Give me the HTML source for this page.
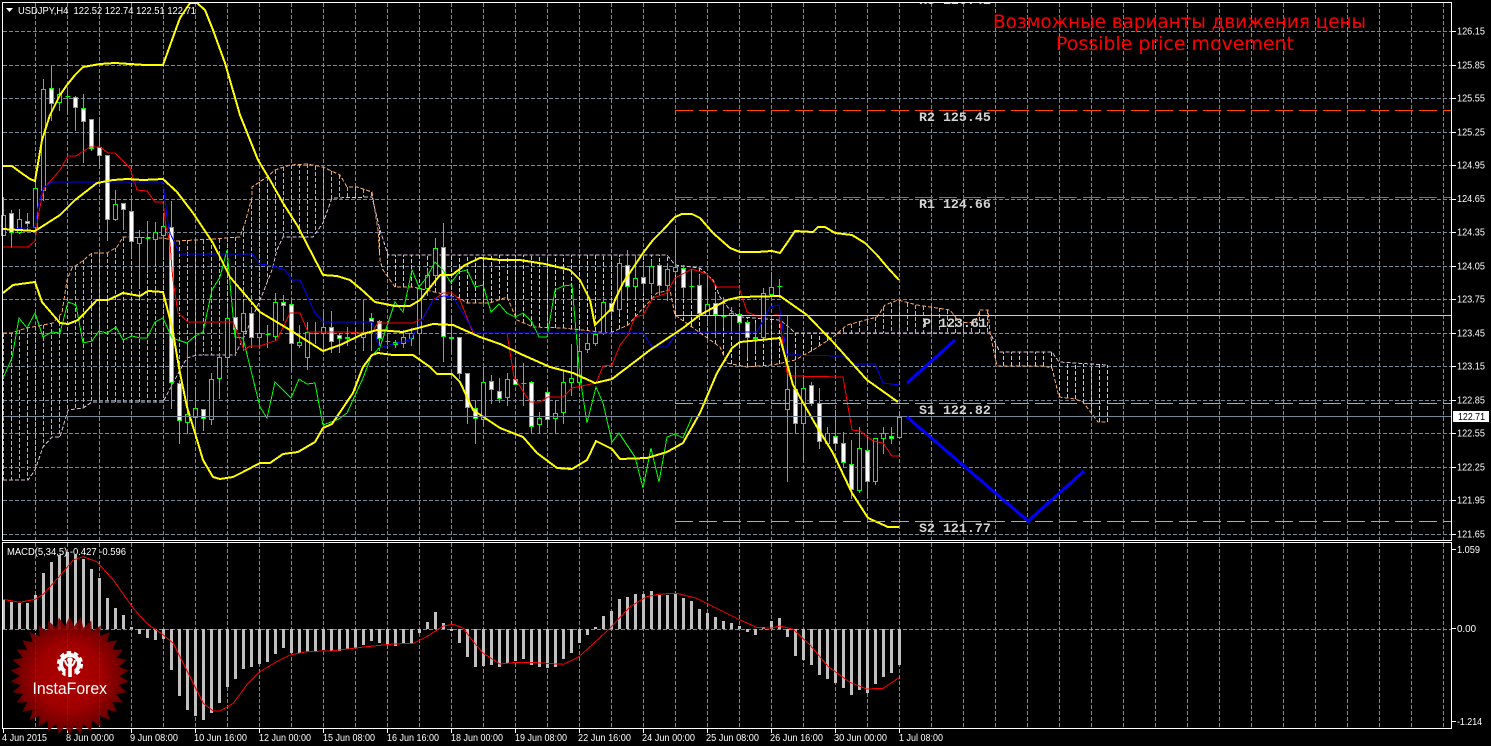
<!DOCTYPE html>
<html lang="ru">
<head>
<meta charset="utf-8">
<title>USDJPY,H4</title>
<style>
html,body{margin:0;padding:0;background:#000;width:1491px;height:746px;overflow:hidden}
svg{display:block}
.ax{font-family:"Liberation Sans",sans-serif;font-size:10.5px;fill:#fff}
.lv{font-family:"Liberation Mono",monospace;font-size:13.3px;font-weight:bold;fill:#d4d4d4}
.rd{font-family:"DejaVu Sans","Liberation Sans",sans-serif;font-size:19px;fill:#f00}
</style>
</head>
<body>
<svg id="s" xmlns="http://www.w3.org/2000/svg" width="1491" height="746" viewBox="0 0 1491 746">
<defs>
<radialGradient id="lg" cx="50%" cy="50%" r="50%">
<stop offset="0" stop-color="#c40000"/>
<stop offset=".55" stop-color="#b00000"/>
<stop offset="1" stop-color="#6c0000"/>
</radialGradient>
</defs>
<rect width="1491" height="746" fill="#000"/>
<g id="grid" shape-rendering="crispEdges"></g>
<g id="cloud" shape-rendering="crispEdges"></g>
<g id="macd" shape-rendering="crispEdges"></g>
<g id="cand" shape-rendering="crispEdges"></g>
<g shape-rendering="crispEdges" fill="none">
<polyline id="green" stroke="#00ff00" stroke-width="1"/>
<polyline id="red" stroke="#ff0000" stroke-width="1"/>
<polyline id="blue" stroke="#0000ff" stroke-width="1"/>
<polyline id="up" stroke="#ffff00" stroke-width="2"/>
<polyline id="mid" stroke="#ffff00" stroke-width="2"/>
<polyline id="low" stroke="#ffff00" stroke-width="2"/>
<line x1="675" y1="110.5" x2="1451" y2="110.5" stroke="#ff4500" stroke-dasharray="18 6"/>
<line x1="675" y1="197.5" x2="1451" y2="197.5" stroke="#ff4500" stroke-dasharray="18 6"/>
<line x1="675" y1="315.5" x2="1451" y2="315.5" stroke="#ffd700"/>
<line x1="675" y1="403.5" x2="1451" y2="403.5" stroke="#c8a08c" stroke-dasharray="18 6"/>
<line x1="675" y1="521.5" x2="1451" y2="521.5" stroke="#c8a08c" stroke-dasharray="18 6"/>
<line x1="2" y1="416.5" x2="1451" y2="416.5" stroke="#778899"/>
<polyline id="sig" stroke="#ff0000" stroke-width="1"/>
<polyline points="907,383 955,340" stroke="#0000ff" stroke-width="3"/>
<polyline points="907,417 1028,521 1084,471" stroke="#0000ff" stroke-width="3"/>
</g>

<text class="lv" x="919" y="4">R3 126.41</text>
<rect x="0" y="0" width="1491" height="2" fill="#000"/>
<text class="lv" x="919" y="121">R2 125.45</text>
<text class="lv" x="919" y="208">R1 124.66</text>
<text class="lv" x="923" y="327">P 123.61</text>
<text class="lv" x="919" y="414">S1 122.82</text>
<text class="lv" x="919" y="532">S2 121.77</text>

<text class="rd" x="993" y="28" textLength="373" lengthAdjust="spacingAndGlyphs">Возможные варианты движения цены</text>
<text class="rd" x="1056" y="50" textLength="238" lengthAdjust="spacingAndGlyphs">Possible price movement</text>

<polygon points="6,8 13,8 9.5,12" fill="#fff"/>
<text class="ax" x="18" y="14" textLength="178" lengthAdjust="spacingAndGlyphs" xml:space="preserve">USDJPY,H4  122.52 122.74 122.51 122.71</text>
<text class="ax" x="7" y="555" textLength="119" lengthAdjust="spacingAndGlyphs">MACD(5,34,5) -0.427 -0.596</text>

<g shape-rendering="crispEdges" stroke="#fff" fill="none">
<path d="M2.5 2.5H1451.5V540.5H2.5Z"/>
<path d="M2.5 542.5H1451.5V728.5H2.5Z"/>
</g>
<rect x="1453" y="411" width="36" height="11" fill="#fff"/>

<g class="ax">
<text x="1457" y="34.5" textLength="28" lengthAdjust="spacingAndGlyphs">126.15</text>
<text x="1457" y="68.5" textLength="28" lengthAdjust="spacingAndGlyphs">125.85</text>
<text x="1457" y="101.5" textLength="28" lengthAdjust="spacingAndGlyphs">125.55</text>
<text x="1457" y="135.5" textLength="28" lengthAdjust="spacingAndGlyphs">125.25</text>
<text x="1457" y="168.5" textLength="28" lengthAdjust="spacingAndGlyphs">124.95</text>
<text x="1457" y="202" textLength="28" lengthAdjust="spacingAndGlyphs">124.65</text>
<text x="1457" y="235.5" textLength="28" lengthAdjust="spacingAndGlyphs">124.35</text>
<text x="1457" y="269.5" textLength="28" lengthAdjust="spacingAndGlyphs">124.05</text>
<text x="1457" y="302.5" textLength="28" lengthAdjust="spacingAndGlyphs">123.75</text>
<text x="1457" y="336.5" textLength="28" lengthAdjust="spacingAndGlyphs">123.45</text>
<text x="1457" y="369.5" textLength="28" lengthAdjust="spacingAndGlyphs">123.15</text>
<text x="1457" y="403.5" textLength="28" lengthAdjust="spacingAndGlyphs">122.85</text>
<text x="1457" y="436.5" textLength="28" lengthAdjust="spacingAndGlyphs">122.55</text>
<text x="1457" y="470.5" textLength="28" lengthAdjust="spacingAndGlyphs">122.25</text>
<text x="1457" y="503.5" textLength="28" lengthAdjust="spacingAndGlyphs">121.95</text>
<text x="1457" y="537.5" textLength="28" lengthAdjust="spacingAndGlyphs">121.65</text>
<text x="1458" y="420" textLength="27" lengthAdjust="spacingAndGlyphs" style="fill:#000">122.71</text>
<text x="1457" y="553" textLength="23" lengthAdjust="spacingAndGlyphs">1.059</text>
<text x="1457" y="632" textLength="19" lengthAdjust="spacingAndGlyphs">0.00</text>
<text x="1457" y="725" textLength="25" lengthAdjust="spacingAndGlyphs">-1.214</text>
<text x="2" y="741" textLength="45" lengthAdjust="spacingAndGlyphs">4 Jun 2015</text>
<text x="66" y="741" textLength="48" lengthAdjust="spacingAndGlyphs">8 Jun 00:00</text>
<text x="130" y="741" textLength="48" lengthAdjust="spacingAndGlyphs">9 Jun 08:00</text>
<text x="194" y="741" textLength="53" lengthAdjust="spacingAndGlyphs">10 Jun 16:00</text>
<text x="259" y="741" textLength="52" lengthAdjust="spacingAndGlyphs">12 Jun 00:00</text>
<text x="323" y="741" textLength="52" lengthAdjust="spacingAndGlyphs">15 Jun 08:00</text>
<text x="387" y="741" textLength="52" lengthAdjust="spacingAndGlyphs">16 Jun 16:00</text>
<text x="451" y="741" textLength="52" lengthAdjust="spacingAndGlyphs">18 Jun 00:00</text>
<text x="515" y="741" textLength="52" lengthAdjust="spacingAndGlyphs">19 Jun 08:00</text>
<text x="578" y="741" textLength="53" lengthAdjust="spacingAndGlyphs">22 Jun 16:00</text>
<text x="642" y="741" textLength="53" lengthAdjust="spacingAndGlyphs">24 Jun 00:00</text>
<text x="706" y="741" textLength="53" lengthAdjust="spacingAndGlyphs">25 Jun 08:00</text>
<text x="770" y="741" textLength="53" lengthAdjust="spacingAndGlyphs">26 Jun 16:00</text>
<text x="834" y="741" textLength="53" lengthAdjust="spacingAndGlyphs">30 Jun 00:00</text>
<text x="899" y="741" textLength="44" lengthAdjust="spacingAndGlyphs">1 Jul 08:00</text>
</g>

<g id="logo">
<polygon id="star" fill="url(#lg)" fill-opacity=".9"/>
<g fill="none" stroke="#fff">
<circle cx="70" cy="664" r="11.6" stroke-width="3" stroke-dasharray="4.4 2.89"/>
<circle cx="70" cy="664" r="9" stroke-width="4"/>
</g>
<rect x="65.5" y="670" width="9" height="9" fill="#b40000"/>
<circle cx="70" cy="660" r="2.8" fill="#fff"/>
<rect x="68.2" y="661" width="3.6" height="16" fill="#fff"/>
<path d="M65 660Q65.5 665 70 666.5Q74.5 665 75 660" fill="none" stroke="#fff" stroke-width="2"/>
<text x="32.5" y="694" font-family="Liberation Sans,sans-serif" font-size="16.5" fill="#fff" textLength="74.5" lengthAdjust="spacingAndGlyphs">InstaForex</text>
</g>
</svg>
<script>
(function(){
var $=function(i){return document.getElementById(i)};
function set(id,html){$(id).insertAdjacentHTML('beforeend',html)}
var G='#778899',D='4 2',h='',i;
// grid
[31,65,98,132,165,199,232,266,299,333,366,400,433,467,500,534].forEach(function(y){
 h+='<line x1="3" x2="1451" y1="'+(y+.5)+'" y2="'+(y+.5)+'" stroke="'+G+'" stroke-dasharray="'+D+'"/>';
 h+='<line x1="1452" x2="1456" y1="'+(y+.5)+'" y2="'+(y+.5)+'" stroke="#fff"/>';
});
for(i=1;i<=45;i++){var x=3.5+32*i;
 h+='<line x1="'+x+'" x2="'+x+'" y1="3" y2="540" stroke="'+G+'" stroke-dasharray="'+D+'"/>';
 h+='<line x1="'+x+'" x2="'+x+'" y1="543" y2="728" stroke="'+G+'" stroke-dasharray="'+D+'"/>';
}
h+='<line x1="3" x2="1451" y1="629.5" y2="629.5" stroke="'+G+'" stroke-dasharray="'+D+'"/>';
[549,628,721].forEach(function(y){h+='<line x1="1452" x2="1456" y1="'+(y+.5)+'" y2="'+(y+.5)+'" stroke="#fff"/>'});
for(i=0;i<=14;i++){var tx=3.5+64*i;h+='<line x1="'+tx+'" x2="'+tx+'" y1="729" y2="733" stroke="#fff"/>'}
set('grid',h);

// cloud
var A="3,333 12,333 20,330 27,328 43,325 53,323 62,313 67,280 72,268 80,263 92,253 107,253 117,247 123,237 163,238 177,241 213,239 240,237 245,223 252,197 252,187 267,177 275,170 290,165 307,164 323,167 340,175 347,187 357,187 372,192 378,230 380,260 383,270 395,287 413,287 460,298 467,303 490,303 507,297 517,320 533,327 563,328 610,333 628,325 637,315 657,293 670,290 675,315 720,347 727,363 747,367 773,365 795,360 813,350 833,337 847,325 877,317 885,305 898,300 917,305 950,310 960,323 975,322 980,310 988,310 990,333 997,366 1043,366 1052,368 1059,397 1075,399 1083,402 1098,422 1107,422";
var B="3,480 28,480 35,470 43,447 52,437 60,437 68,410 83,408 92,402 163,402 180,370 187,358 197,355 235,355 245,335 263,293 268,280 272,270 277,250 283,237 313,237 323,223 332,198 372,197 380,230 388,255 500,255 667,255 675,265 700,268 713,280 720,297 730,310 740,317 780,320 790,328 795,333 990,333 1000,352 1052,352 1059,362 1107,365";
function P(s){return s.split(' ').map(function(p){return p.split(',').map(Number)})}
function at(L,x){for(var j=1;j<L.length;j++){if(x<=L[j][0]){var a=L[j-1],b=L[j];if(b[0]==a[0])return b[1];return a[1]+(b[1]-a[1])*(x-a[0])/(b[0]-a[0])}}return L[L.length-1][1]}
var pa=P(A),pb=P(B),OR='#f4a460',TH='#d8bfd8';
h='<polyline fill="none" stroke="'+OR+'" stroke-dasharray="'+D+'" points="'+A+'"/><polyline fill="none" stroke="'+TH+'" stroke-dasharray="'+D+'" points="'+B+'"/>';
for(i=0;i<=138;i++){var cx=3.5+8*i;if(cx>1107.5)break;
 var ya=Math.round(at(pa,cx)),yb=Math.round(at(pb,cx));
 h+='<line x1="'+cx+'" x2="'+cx+'" y1="'+ya+'" y2="'+yb+'" stroke="'+(ya<yb?OR:TH)+'" stroke-dasharray="'+D+'"/>';
}
set('cloud',h);

// candles: top,bottom,wickTop,wickBottom,white(1)/black(0)
var C=[[215,235,197,235,0],[213,232,210,247,1],[219,232,209,233,0],[221,223,213,230,1],[188,227,182,230,0],[89,190,79,200,0],[88,103,66,120,1],[94,102,88,110,0],[96,96,90,113,0],[97,107,96,130,1],[108,121,94,162,1],[119,148,119,150,1],[147,155,117,167,1],[155,219,155,240,1],[204,219,190,220,0],[203,209,203,229,1],[211,241,200,257,1],[237,243,230,287,0],[238,238,221,272,0],[232,239,222,263,0],[226,235,217,257,0],[227,382,201,408,1],[383,420,380,443,1],[414,422,343,433,0],[408,417,387,433,0],[409,418,409,430,1],[379,419,373,424,0],[357,378,353,398,0],[318,357,308,367,0],[317,329,270,355,1],[313,331,302,350,0],[313,337,307,347,1],[333,337,312,347,0],[334,334,325,347,0],[302,336,293,340,0],[302,305,295,320,1],[304,343,298,370,1],[342,345,325,347,0],[332,357,322,369,0],[333,333,322,343,0],[327,333,313,350,0],[327,341,311,352,1],[335,338,333,352,1],[337,338,327,345,1],[332,332,328,335,0],[332,337,300,350,0],[318,321,313,350,1],[321,338,320,350,1],[341,341,333,348,0],[342,344,340,347,1],[337,343,330,347,0],[333,338,328,345,0],[288,333,285,353,0],[275,288,270,295,0],[248,275,238,280,0],[247,336,223,361,1],[337,338,315,353,1],[337,373,337,378,1],[373,407,373,423,1],[408,418,400,443,1],[382,419,367,425,0],[381,389,375,403,1],[391,398,378,402,1],[379,397,373,405,0],[379,384,360,384,1],[383,383,363,405,0],[382,426,381,433,1],[418,424,412,433,0],[392,419,388,427,1],[413,418,400,433,0],[382,412,370,423,0],[378,382,344,395,0],[351,382,338,385,0],[343,349,333,352,0],[334,343,330,345,0],[302,333,297,334,0],[303,311,300,315,1],[263,309,258,313,0],[265,286,250,297,1],[278,286,255,297,0],[277,283,263,292,1],[266,283,260,293,0],[265,285,263,295,1],[269,285,263,300,0],[267,271,228,272,0],[268,287,265,297,1],[286,286,270,300,0],[285,313,275,317,1],[304,315,275,325,0],[303,314,293,337,1],[316,316,297,327,0],[313,315,307,333,0],[314,322,313,343,1],[322,337,320,357,1],[337,338,323,350,1],[293,337,288,340,0],[287,294,272,295,0],[286,286,279,297,0],[389,409,315,481,0],[389,423,362,432,1],[388,423,377,460,0],[385,403,382,405,1],[403,441,388,448,1],[433,443,427,445,0],[436,443,410,448,1],[443,462,432,467,1],[464,489,440,498,1],[448,490,427,492,0],[450,481,437,497,1],[438,481,438,484,0],[433,438,427,453,0],[436,438,427,443,1],[417,437,411,438,0]];
h='';
C.forEach(function(c,k){var x=3.5+8*k;
 h+='<line x1="'+x+'" x2="'+x+'" y1="'+c[2]+'" y2="'+(c[3]+1)+'" stroke="#00ff00"/>';
 if(c[0]==c[1]){h+='<line x1="'+(x-2)+'" x2="'+(x+3)+'" y1="'+(c[0]+.5)+'" y2="'+(c[0]+.5)+'" stroke="#00ff00"/>'}
 else{h+='<rect x="'+(x-2)+'" y="'+(c[0]+.5)+'" width="4" height="'+(c[1]-c[0])+'" fill="'+(c[4]?'#fff':'#000')+'" stroke="#00ff00"/>'}
});
set('cand',h);

// MACD histogram (values in zoom units: y=540+v/3, zero 268)
var M=[180,187,188,188,165,100,67,45,35,45,57,88,115,175,205,225,260,282,293,300,298,390,467,510,528,540,518,488,442,417,387,381,373,367,343,324,340,340,337,333,330,333,332,328,325,315,303,310,313,318,310,310,278,246,216,249,273,308,351,381,378,375,380,370,363,357,375,381,385,380,357,339,309,285,262,228,213,177,171,162,162,153,165,165,160,174,183,207,219,231,243,249,258,275,285,260,243,234,291,348,360,375,405,417,429,444,465,450,459,432,411,399,375];
h='';
M.forEach(function(v,k){var x=2+8*k,y=Math.round(540+v/3),z=629;
 h+='<rect x="'+x+'" y="'+Math.min(y,z)+'" width="3" height="'+Math.max(1,Math.abs(y-z))+'" fill="#c0c0c0"/>';
});
set('macd',h);

// lines
$('up').setAttribute('points',"3,166 12,166 20,172 30,179 35,181 42,140 50,115 60,95 67,85 75,75 83,67 100,64 115,63 145,65 163,65 172,40 180,18 190,3 197,3 205,10 213,30 225,63 240,115 258,160 270,180 283,203 297,225 310,250 323,275 337,276 350,280 362,290 375,302 395,306 410,306 420,300 432,285 440,275 452,275 465,265 480,258 500,260 520,260 545,264 570,270 580,280 590,300 595,325 603,317 612,308 615,300 623,283 633,268 643,253 653,240 663,230 675,217 682,214 692,214 700,218 713,233 730,248 740,252 757,252 772,251 780,253 787,243 795,231 813,232 818,227 825,227 835,233 852,235 865,243 877,255 888,268 899,280");
$('mid').setAttribute('points',"3,229 35,231 60,215 75,200 97,183 113,180 127,179 143,180 163,179 177,192 193,213 213,243 230,277 260,312 290,330 323,351 340,345 363,334 377,330 403,332 433,324 453,325 480,337 500,344 523,355 550,367 573,373 595,383 612,379 637,360 650,350 683,328 700,315 727,300 740,297 780,296 807,315 833,342 867,380 898,402");
$('low').setAttribute('points',"3,293 13,285 35,282 42,302 60,323 68,324 78,320 97,300 108,300 123,293 140,296 148,291 163,292 172,327 180,373 187,407 195,433 203,460 213,477 220,479 233,477 243,472 260,463 270,463 283,454 298,452 315,442 323,428 332,424 353,393 363,367 372,355 378,353 393,355 413,355 430,367 437,374 452,374 460,382 473,410 500,428 523,437 537,453 557,468 572,469 587,460 596,441 612,449 620,459 647,458 667,452 683,443 700,413 717,373 732,348 740,342 780,338 793,385 817,427 833,453 852,493 868,518 888,527 899,527");
$('red').setAttribute('points',"3,247 28,247 35,241 38,217 42,197 45,187 60,170 68,156 76,156 90,147 100,147 108,153 115,153 130,168 137,190 147,191 155,202 163,202 166,227 170,243 172,270 173,280 178,313 188,322 233,322 244,350 250,346 260,346 277,340 290,313 300,313 308,332 347,332 360,333 372,332 378,323 413,323 423,318 433,300 443,293 452,293 460,300 473,333 507,333 514,377 530,402 540,402 548,397 563,397 572,388 596,383 603,366 612,365 620,345 628,335 635,317 643,315 653,298 667,293 675,278 692,269 707,274 717,287 739,287 747,312 757,316 779,315 787,373 790,376 843,377 852,430 860,431 873,441 883,443 892,456 899,456");
$('blue').setAttribute('points',"3,230 35,227 38,207 43,188 52,182 163,182 167,217 170,233 180,254 252,254 260,264 273,266 285,270 292,280 300,280 315,313 323,322 372,322 377,340 380,348 393,344 410,340 420,323 433,300 443,296 453,297 467,320 475,333 643,333 652,347 667,347 677,332 757,332 770,307 779,305 787,355 843,356 852,364 875,364 883,383 899,385");
$('green').setAttribute('points',"3,378 12,358 19,318 27,328 35,313 43,337 52,332 60,333 68,302 76,305 83,343 92,341 99,331 107,333 116,327 123,340 132,336 140,338 147,338 155,322 163,318 172,338 187,343 195,336 203,332 212,290 220,277 227,250 235,337 243,338 260,407 267,418 275,382 291,398 299,379 307,384 315,383 323,425 339,419 347,413 363,378 371,357 380,347 395,302 403,312 412,270 419,287 427,277 435,262 443,270 451,283 459,272 467,270 475,287 483,285 491,312 499,304 507,313 515,317 523,313 532,322 539,337 547,337 555,290 563,286 572,285 580,377 587,423 596,387 603,403 612,442 619,433 627,445 635,457 643,488 651,448 659,482 667,437 675,434 683,438 692,417");
var S="8,178 60,187 105,178 130,163 180,107 220,60 250,50 290,65 340,120 400,205 440,250 490,285 520,310 550,370 580,430 610,490 640,513 660,513 700,490 740,435 780,395 830,365 870,345 920,335 1000,332 1100,320 1180,312 1240,310 1280,290 1330,258 1360,253 1390,265 1420,305 1450,340 1500,372 1550,367 1610,368 1690,373 1735,352 1770,320 1830,265 1890,200 1940,170 1980,162 2030,160 2090,175 2150,205 2220,240 2270,262 2310,265 2340,258 2380,268 2430,315 2485,380 2550,427 2600,447 2650,445 2697,413".split(' ').map(function(p){var a=p.split(',');return (a[0]/3).toFixed(1)+','+(540+a[1]/3).toFixed(1)}).join(' ');
$('sig').setAttribute('points',S);

// logo star
var n=34,pts=[],cx0=69.7,cy0=676,R=59.5,r=50;
for(i=0;i<n*2;i++){var a=Math.PI*i/n-Math.PI/2,q=i%2?r:R;pts.push((cx0+q*Math.cos(a)).toFixed(1)+','+(cy0+q*Math.sin(a)).toFixed(1))}
$('star').setAttribute('points',pts.join(' '));
})();
</script>
</body>
</html>
